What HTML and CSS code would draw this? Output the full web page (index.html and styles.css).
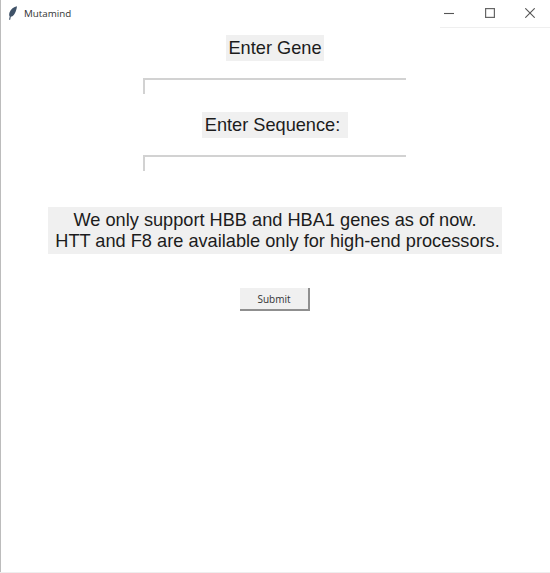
FILE: index.html
```html
<!DOCTYPE html>
<html lang="en">
<head>
    <meta charset="UTF-8">
    <title>Mutamind</title>
    <link rel="stylesheet" href="styles.css">
</head>
<body>
    <div class="window">
        <div class="title-bar">
            <svg class="app-icon" width="10" height="14" viewBox="0 0 10 14">
                <path d="M9 0.2 C6 0.8 2.6 3 1.5 6.5 C1 8.2 1 9.6 1.7 10.6 L1 13.8 L2.2 13.8 L2.8 10.8 C5.2 10.4 6.8 8 7.7 5.5 C8.4 3.6 8.9 1.8 9 0.2 Z" fill="#3f5268"/>
            </svg>
            <span class="app-name">Mutamind</span>
            <div class="window-controls">
                <svg class="control" width="10" height="10" viewBox="0 0 10 10">
                    <path d="M0 5.5 H10" stroke="#555" stroke-width="1.1"/>
                </svg>
                <svg class="control" width="10" height="10" viewBox="0 0 10 10">
                    <rect x="0.6" y="0.6" width="8.8" height="8.8" fill="none" stroke="#666" stroke-width="1.2"/>
                </svg>
                <svg class="control" width="10" height="10" viewBox="0 0 10 10">
                    <path d="M0.3 0.3 L9.7 9.7 M9.7 0.3 L0.3 9.7" stroke="#555" stroke-width="1.1" fill="none"/>
                </svg>
            </div>
        </div>

        <div class="content">
            <label class="label label-gene">Enter Gene</label>
            <input type="text" class="entry entry-gene">
            <label class="label label-sequence">Enter Sequence:</label>
            <input type="text" class="entry entry-sequence">
            <div class="notice">We only support HBB and HBA1 genes as of now.<br>&nbsp;HTT and F8 are available only for high-end processors.</div>
            <button class="submit-button">Submit</button>
        </div>
    </div>
</body>
</html>
```

FILE: styles.css
```css
html, body {
    margin: 0;
    padding: 0;
    background: #fff;
}

body {
    width: 550px;
    height: 573px;
    overflow: hidden;
    font-family: "Liberation Sans", Arial, sans-serif;
    color: #1c1c1c;
}

.window {
    box-sizing: border-box;
    height: 573px;
    border-bottom: 1px solid #eeeeee;
    box-shadow: inset 1px 0 0 #bcbcbc;
}

.title-bar {
    position: relative;
    display: flex;
    align-items: center;
    height: 27px;
    padding-left: 8px;
}

.app-icon {
    margin: 0 6px 2px 0;
}

.app-name {
    margin-bottom: 1px;
    font-family: "Open Sans", "Noto Sans", sans-serif;
    font-size: 9.8px;
    color: #333;
}

.window-controls {
    position: absolute;
    top: 0;
    right: 0;
    box-sizing: border-box;
    display: flex;
    align-items: center;
    gap: 30.5px;
    width: 110px;
    height: 28px;
    padding: 0 0 1px 4px;
    border-bottom: 1px solid #efefef;
}

.control {
    flex: none;
}

.content {
    display: flex;
    flex-direction: column;
    align-items: center;
    padding-top: 8px;
}

.label {
    box-sizing: border-box;
    display: block;
    background: #f0f0f0;
    font-size: 18.2px;
    line-height: 26px;
    text-align: center;
}

.label-gene {
    width: 98px;
}

.label-sequence {
    width: 146px;
    padding-right: 5px;
}

.entry {
    box-sizing: border-box;
    display: block;
    width: 263px;
    height: 16px;
    margin: 17px 0 0 -1px;
    padding: 0;
    background: #fff;
    border: none;
    border-top: 2px solid #d2d2d2;
    border-left: 2px solid #d2d2d2;
    outline: none;
}

.entry-gene {
    margin-bottom: 18px;
}

.notice {
    width: 454px;
    margin-top: 36px;
    padding: 3px 0 2px;
    background: #f0f0f0;
    font-size: 18.2px;
    line-height: 21px;
    text-align: center;
    white-space: nowrap;
}

.submit-button {
    box-sizing: border-box;
    width: 70px;
    height: 23px;
    margin-top: 34px;
    padding: 0;
    background: #f0f0f0;
    border: none;
    border-right: 2px solid #8f8f8f;
    border-bottom: 2px solid #8f8f8f;
    font-family: "Open Sans", "Noto Sans", sans-serif;
    font-size: 10px;
    color: #333;
}
```
